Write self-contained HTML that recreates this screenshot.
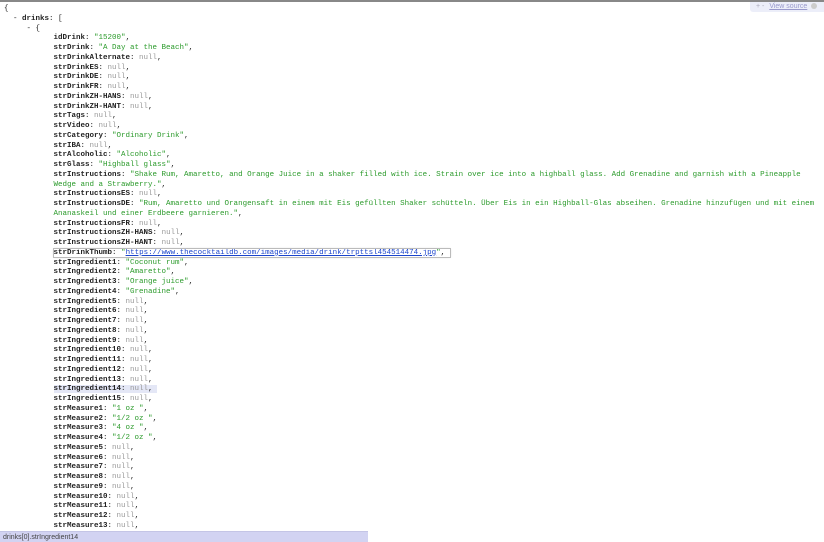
<!DOCTYPE html>
<html><head><meta charset="utf-8"><style>
html,body{margin:0;padding:0;background:#fff;width:824px;height:542px;overflow:hidden}
body{border-top:2px solid #888;box-sizing:border-box;position:relative}
#c{position:absolute;left:4px;top:3px;font:7.5px/9.76px "Liberation Mono",monospace;color:#222;white-space:pre}
.l{height:9.76px;position:relative}
b{font-weight:bold}
.s{color:#2a9a2a}
.n{color:#999}
a{color:#1a44cc;text-decoration:underline}
.sel{background:#fff;outline:1px solid #bbb;box-shadow:0 0 2px #aaa}
.hl{background:#e4e7f6}
#st{position:absolute;left:0;bottom:0;width:368px;height:11px;background:#d2d3f2;font:7px/11px "Liberation Sans",sans-serif;color:#444;padding-left:3px;box-sizing:border-box;border-top:1px solid #c4c5e6}
#tr{position:absolute;right:0;top:0;width:74px;height:10px;background:#eceef9;font:7px/9px "Liberation Sans",sans-serif;color:#aab;padding-left:6px;box-sizing:border-box;border-radius:0 0 0 3px}
#tr u{color:#99c;margin-left:3px}
#tr i{display:inline-block;width:6px;height:6px;border-radius:50%;background:#ccc;margin-left:4px;vertical-align:-1px}
</style></head><body>
<div id="c"><div class="l">{</div><div class="l">  - <b>drinks</b>: [</div><div class="l">     - {</div><div class="l">           <b>idDrink</b>: <span class="s">"15200"</span>,</div><div class="l">           <b>strDrink</b>: <span class="s">"A Day at the Beach"</span>,</div><div class="l">           <b>strDrinkAlternate</b>: <span class="n">null</span>,</div><div class="l">           <b>strDrinkES</b>: <span class="n">null</span>,</div><div class="l">           <b>strDrinkDE</b>: <span class="n">null</span>,</div><div class="l">           <b>strDrinkFR</b>: <span class="n">null</span>,</div><div class="l">           <b>strDrinkZH-HANS</b>: <span class="n">null</span>,</div><div class="l">           <b>strDrinkZH-HANT</b>: <span class="n">null</span>,</div><div class="l">           <b>strTags</b>: <span class="n">null</span>,</div><div class="l">           <b>strVideo</b>: <span class="n">null</span>,</div><div class="l">           <b>strCategory</b>: <span class="s">"Ordinary Drink"</span>,</div><div class="l">           <b>strIBA</b>: <span class="n">null</span>,</div><div class="l">           <b>strAlcoholic</b>: <span class="s">"Alcoholic"</span>,</div><div class="l">           <b>strGlass</b>: <span class="s">"Highball glass"</span>,</div><div class="l">           <b>strInstructions</b>: <span class="s">"Shake Rum, Amaretto, and Orange Juice in a shaker filled with ice. Strain over ice into a highball glass. Add Grenadine and garnish with a Pineapple</span></div><div class="l">           <span class="s">Wedge and a Strawberry."</span>,</div><div class="l">           <b>strInstructionsES</b>: <span class="n">null</span>,</div><div class="l">           <b>strInstructionsDE</b>: <span class="s">"Rum, Amaretto und Orangensaft in einem mit Eis gefüllten Shaker schütteln. Über Eis in ein Highball-Glas abseihen. Grenadine hinzufügen und mit einem</span></div><div class="l">           <span class="s">Ananaskeil und einer Erdbeere garnieren."</span>,</div><div class="l">           <b>strInstructionsFR</b>: <span class="n">null</span>,</div><div class="l">           <b>strInstructionsZH-HANS</b>: <span class="n">null</span>,</div><div class="l">           <b>strInstructionsZH-HANT</b>: <span class="n">null</span>,</div><div class="l">           <span class="sel"><b>strDrinkThumb</b>: <span class="s">"<a>https://www.thecocktaildb.com/images/media/drink/trpttsl454514474.jpg</a>"</span>, </span></div><div class="l">           <b>strIngredient1</b>: <span class="s">"Coconut rum"</span>,</div><div class="l">           <b>strIngredient2</b>: <span class="s">"Amaretto"</span>,</div><div class="l">           <b>strIngredient3</b>: <span class="s">"Orange juice"</span>,</div><div class="l">           <b>strIngredient4</b>: <span class="s">"Grenadine"</span>,</div><div class="l">           <b>strIngredient5</b>: <span class="n">null</span>,</div><div class="l">           <b>strIngredient6</b>: <span class="n">null</span>,</div><div class="l">           <b>strIngredient7</b>: <span class="n">null</span>,</div><div class="l">           <b>strIngredient8</b>: <span class="n">null</span>,</div><div class="l">           <b>strIngredient9</b>: <span class="n">null</span>,</div><div class="l">           <b>strIngredient10</b>: <span class="n">null</span>,</div><div class="l">           <b>strIngredient11</b>: <span class="n">null</span>,</div><div class="l">           <b>strIngredient12</b>: <span class="n">null</span>,</div><div class="l">           <b>strIngredient13</b>: <span class="n">null</span>,</div><div class="l">           <span class="hl"><b>strIngredient14</b>: <span class="n">null</span>, </span></div><div class="l">           <b>strIngredient15</b>: <span class="n">null</span>,</div><div class="l">           <b>strMeasure1</b>: <span class="s">"1 oz "</span>,</div><div class="l">           <b>strMeasure2</b>: <span class="s">"1/2 oz "</span>,</div><div class="l">           <b>strMeasure3</b>: <span class="s">"4 oz "</span>,</div><div class="l">           <b>strMeasure4</b>: <span class="s">"1/2 oz "</span>,</div><div class="l">           <b>strMeasure5</b>: <span class="n">null</span>,</div><div class="l">           <b>strMeasure6</b>: <span class="n">null</span>,</div><div class="l">           <b>strMeasure7</b>: <span class="n">null</span>,</div><div class="l">           <b>strMeasure8</b>: <span class="n">null</span>,</div><div class="l">           <b>strMeasure9</b>: <span class="n">null</span>,</div><div class="l">           <b>strMeasure10</b>: <span class="n">null</span>,</div><div class="l">           <b>strMeasure11</b>: <span class="n">null</span>,</div><div class="l">           <b>strMeasure12</b>: <span class="n">null</span>,</div><div class="l">           <b>strMeasure13</b>: <span class="n">null</span>,</div></div>
<div id="tr">+ - <u>View source</u><i></i></div>
<div id="st">drinks[0].strIngredient14</div>
</body></html>
